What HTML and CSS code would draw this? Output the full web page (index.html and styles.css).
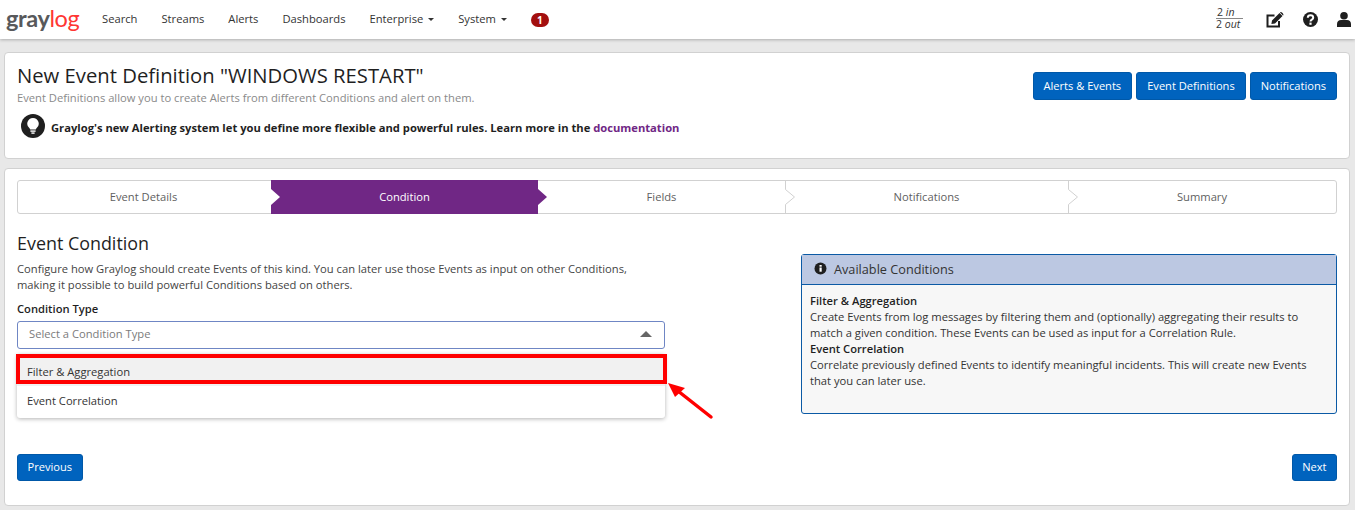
FILE: index.html
```html
<!DOCTYPE html>
<html lang="en">
<head>
    <meta charset="UTF-8">
    <meta name="viewport" content="width=device-width, initial-scale=1.0">
    <title>New Event Definition - Graylog</title>
    <link rel="stylesheet" href="styles.css">
</head>
<body>
    <nav class="navbar">
        <a class="logo"><span class="logo-gray">gray</span><span class="logo-red">log</span></a>
        <ul class="nav-links">
            <li>Search</li>
            <li>Streams</li>
            <li>Alerts</li>
            <li>Dashboards</li>
            <li>Enterprise <span class="caret"></span></li>
            <li>System <span class="caret"></span></li>
            <li><span class="badge">1</span></li>
        </ul>
        <div class="nav-right">
            <div class="throughput">
                <div class="throughput-in">2 <i>in</i></div>
                <div>2 <i>out</i></div>
            </div>
            <svg class="nav-icon" width="18" height="16" viewBox="0 0 18 16">
                <path fill="none" stroke="#1f1f1f" stroke-width="2" d="M13 9v5.500H1.500V3.500h7"/>
                <path fill="#1f1f1f" d="M6 8.500 13.500 1l3 3-7.500 7.500-3.600.600zM14.500 0c1.500 0 3 1.500 3 3l-.5.500-3-3z"/>
            </svg>
            <svg class="nav-icon" width="15" height="15" viewBox="0 0 15 15">
                <circle cx="7.500" cy="7.500" r="7.500" fill="#1f1f1f"/>
                <path fill="none" stroke="#fff" stroke-width="2" d="M4.800 5.800c0-3.300 5.400-3.300 5.400 0 0 2-2.700 1.800-2.700 3.700"/>
                <rect x="6.400" y="10.600" width="2.200" height="2.200" fill="#fff"/>
            </svg>
            <svg class="nav-icon" width="14" height="15" viewBox="0 0 14 15">
                <circle cx="7" cy="3.800" r="3.800" fill="#1f1f1f"/>
                <path fill="#1f1f1f" d="M0 15v-3c0-2.500 1.800-4 4-4h6c2.200 0 4 1.500 4 4v3z"/>
            </svg>
        </div>
    </nav>

    <main class="page">
        <section class="card header-card">
            <div class="header-text">
                <h1>New Event Definition "WINDOWS RESTART"</h1>
                <p class="subtitle">Event Definitions allow you to create Alerts from different Conditions and alert on them.</p>
                <div class="tip">
                    <span class="tip-icon">
                        <svg width="12" height="16" viewBox="0 0 12 16">
                            <path fill="#fff" d="M6 0a5.700 5.700 0 0 0-3.500 10.200c.5.400.7 1 .7 1.400h5.600c0-.4.2-1 .7-1.400A5.700 5.700 0 0 0 6 0z"/>
                            <rect x="3.400" y="12.400" width="5.200" height="1.400" fill="#fff"/>
                            <rect x="4.400" y="14.400" width="3.200" height="1.400" fill="#fff"/>
                        </svg>
                    </span>
                    <span class="tip-text">Graylog's new Alerting system let you define more flexible and powerful rules. Learn more in the <a href="#">documentation</a></span>
                </div>
            </div>
            <div class="header-buttons">
                <button class="btn">Alerts &amp; Events</button>
                <button class="btn">Event Definitions</button>
                <button class="btn">Notifications</button>
            </div>
        </section>

        <section class="card wizard-card">
            <div class="steps">
                <div class="step step-details">Event Details</div>
                <div class="step step-condition">Condition</div>
                <div class="step step-fields">Fields
                    <svg class="chevron" width="11" height="32" viewBox="0 0 11 32">
                        <path fill="#fff" stroke="#d1d1d1" d="M.5 0v8.500L9.500 16l-9 7.500V32"/>
                    </svg>
                </div>
                <div class="step step-notifications">Notifications
                    <svg class="chevron" width="11" height="32" viewBox="0 0 11 32">
                        <path fill="#fff" stroke="#d1d1d1" d="M.5 0v8.500L9.500 16l-9 7.500V32"/>
                    </svg>
                </div>
                <div class="step step-summary">Summary</div>
            </div>

            <div class="wizard-body">
                <div class="condition-form">
                    <h2>Event Condition</h2>
                    <p class="help">Configure how Graylog should create Events of this kind. You can later use those Events as input on other Conditions, making it possible to build powerful Conditions based on others.</p>
                    <label class="field-label">Condition Type</label>
                    <div class="select">
                        <span>Select a Condition Type</span>
                        <span class="select-arrow"></span>
                    </div>
                    <div class="menu">
                        <div class="menu-item menu-item-active">Filter &amp; Aggregation</div>
                        <div class="menu-item">Event Correlation</div>
                        <div class="highlight"></div>
                        <svg class="arrow" width="50" height="40" viewBox="0 0 50 40">
                            <path fill="none" stroke="#f00" stroke-width="3.500" stroke-linecap="round" d="M45 36 12 10"/>
                            <path fill="#f00" d="M2 2l17 5-10 9z"/>
                        </svg>
                    </div>
                </div>

                <aside class="panel">
                    <div class="panel-heading">
                        <svg width="13" height="13" viewBox="0 0 13 13">
                            <circle cx="6.500" cy="6.500" r="6" fill="#1f1f1f"/>
                            <rect x="5.500" y="5.500" width="2.200" height="4.200" fill="#fff"/>
                            <rect x="5.500" y="3" width="2.200" height="1.700" fill="#fff"/>
                        </svg>
                        Available Conditions
                    </div>
                    <div class="panel-body">
                        <b>Filter &amp; Aggregation</b><br>
                        Create Events from log messages by filtering them and (optionally) aggregating their results to match a given condition. These Events can be used as input for a Correlation Rule.<br>
                        <b>Event Correlation</b><br>
                        Correlate previously defined Events to identify meaningful incidents. This will create new Events that you can later use.
                    </div>
                </aside>
            </div>

            <div class="wizard-nav">
                <button class="btn">Previous</button>
                <button class="btn">Next</button>
            </div>
        </section>
    </main>
</body>
</html>
```

FILE: styles.css
```css
html, body {
    height: 100%;
    overflow: hidden;
}
body {
    margin: 0;
    font-family: "Open Sans", sans-serif;
    font-size: 11.2px;
    line-height: 16px;
    color: #1f1f1f;
    background-color: #e8e8e8;
}
.navbar {
    display: flex;
    align-items: center;
    height: 39px;
    padding-left: 6px;
    background-color: #fff;
    box-shadow: 0 1px 3px rgba(0, 0, 0, 0.25);
}
.logo {
    width: 96px;
    font-family: Lato, sans-serif;
    font-size: 23.5px;
    line-height: 26px;
    margin-top: -4px;
    letter-spacing: -0.4px;
}
.logo-gray {
    color: #58595b;
    font-weight: 700;
}
.logo-red {
    color: #ff3633;
}
.nav-links {
    display: flex;
    align-items: center;
    gap: 24px;
    margin: -2px 0 0;
    padding: 0;
    list-style: none;
    color: #333;
}
.caret {
    display: inline-block;
    margin-left: 2px;
    vertical-align: middle;
    border-top: 3px solid #333;
    border-left: 3px solid transparent;
    border-right: 3px solid transparent;
}
.badge {
    display: block;
    width: 18px;
    height: 14px;
    margin-top: 2px;
    border-radius: 7px;
    background-color: #a30f0f;
    color: #fff;
    font-size: 10px;
    font-weight: 700;
    line-height: 14px;
    text-align: center;
}
.nav-right {
    display: flex;
    align-items: center;
    gap: 19px;
    margin-left: auto;
    padding-right: 4px;
}
.throughput {
    width: 27px;
    margin: -2px 4px 0 0;
    font-size: 10.5px;
    line-height: 11px;
    color: #333;
}
.throughput-in {
    padding-left: 1px;
    border-bottom: 1px solid #888;
}

.page {
    padding: 13px 5px 0 4px;
}
.card {
    background-color: #fff;
    border: 1px solid #d1d1d1;
    border-radius: 4px;
    padding: 11px 12px 12px;
}
.header-card {
    display: flex;
    justify-content: space-between;
    height: 107px;
    box-sizing: border-box;
    padding-top: 10px;
}
h1 {
    margin: 0;
    font-size: 20.25px;
    font-weight: 400;
    line-height: 24px;
    color: #1f1f1f;
}
.subtitle {
    margin: 3px 0 0;
    color: #8a8a8a;
}
.tip {
    display: flex;
    align-items: center;
    gap: 6px;
    margin: 8px 0 0 4px;
    font-weight: 700;
}
.tip-text {
    margin-top: 3px;
}
.tip a {
    color: #702785;
    text-decoration: none;
}
.tip-icon {
    display: flex;
    align-items: center;
    justify-content: center;
    width: 24px;
    height: 24px;
    border-radius: 50%;
    background-color: #1f1f1f;
}
.header-buttons {
    display: flex;
    gap: 4px;
    margin-top: 9px;
}
.btn {
    height: 28px;
    padding: 0 10px 2px;
    border: 1px solid #0058a8;
    border-radius: 3px;
    background-color: #0063be;
    color: #fff;
    font-family: inherit;
    font-size: 11.1px;
}

.wizard-card {
    position: relative;
    height: 338px;
    box-sizing: border-box;
    margin-top: 9px;
}
.steps {
    display: flex;
    height: 34px;
    box-sizing: border-box;
    border: 1px solid #d1d1d1;
    border-radius: 3px;
    color: #5f5f5f;
}
.step {
    position: relative;
    display: flex;
    align-items: center;
    justify-content: center;
}
.step-details {
    width: 251px;
    padding-right: 2px;
}
.step-condition {
    width: 267px;
    margin: -1px 0;
    background-color: #702785;
    color: #fff;
}
.step-fields { width: 247px; }
.step-notifications { width: 283px; }
.step-summary { flex: 1; }
.chevron {
    position: absolute;
    top: 0;
    left: 100%;
    z-index: 1;
}
.step-condition::before,
.step-condition::after {
    content: "";
    position: absolute;
    top: 50%;
    width: 9px;
    height: 16px;
    margin-top: -8px;
    clip-path: polygon(0 0, 100% 50%, 0 100%);
}
.step-condition::before {
    left: 0;
    background-color: #fff;
}
.step-condition::after {
    left: 100%;
    background-color: #702785;
}

.wizard-body {
    display: flex;
    justify-content: space-between;
}
.condition-form {
    width: 648px;
}
h2 {
    margin: 17px 0 0;
    font-size: 17.9px;
    font-weight: 400;
    line-height: 24px;
    color: #1f1f1f;
}
.help {
    margin: 6px 0 0;
    color: #444;
}
.field-label {
    display: block;
    margin-top: 8px;
    font-weight: 600;
}
.select {
    display: flex;
    align-items: center;
    justify-content: space-between;
    height: 28px;
    box-sizing: border-box;
    margin-top: 4px;
    padding: 0 12px 2px 11px;
    border: 1px solid #6f86c4;
    border-radius: 3px;
    color: #7b7b7b;
}
.select-arrow {
    border-bottom: 6px solid #666;
    border-left: 6px solid transparent;
    border-right: 6px solid transparent;
}
.menu {
    position: relative;
    margin-top: 5px;
    border-radius: 3px;
    background-color: #fff;
    box-shadow: 0 1px 4px rgba(0, 0, 0, 0.3);
    color: #333;
}
.menu-item {
    height: 32px;
    padding: 7px 10px 0;
    box-sizing: border-box;
}
.menu-item-active {
    padding-top: 10px;
    background-color: #f1f1f1;
}
.highlight {
    position: absolute;
    left: -1px;
    top: 0;
    width: 651px;
    height: 30px;
    box-sizing: border-box;
    border: 4px solid #f00;
}
.arrow {
    position: absolute;
    left: 649px;
    top: 27px;
}
.panel {
    width: 536px;
    height: 160px;
    box-sizing: border-box;
    margin-top: 40px;
    border: 1px solid #0b5aa5;
    border-radius: 3px;
    background-color: #f7f7f7;
}
.panel-heading {
    display: flex;
    align-items: center;
    gap: 7px;
    height: 30px;
    padding: 0 0 2px 12px;
    box-sizing: border-box;
    border-bottom: 1px solid #0b5aa5;
    background-color: #bcc8e2;
    font-size: 12.7px;
    color: #333;
}
.panel-body {
    padding: 8px 8px 0;
    color: #333;
}
.panel-body b {
    font-weight: 600;
    color: #1f1f1f;
}
.wizard-nav {
    position: absolute;
    left: 12px;
    right: 12px;
    bottom: 24px;
    display: flex;
    justify-content: space-between;
}
.wizard-nav .btn {
    height: 27px;
    padding: 0 9.5px 2px;
}
```
